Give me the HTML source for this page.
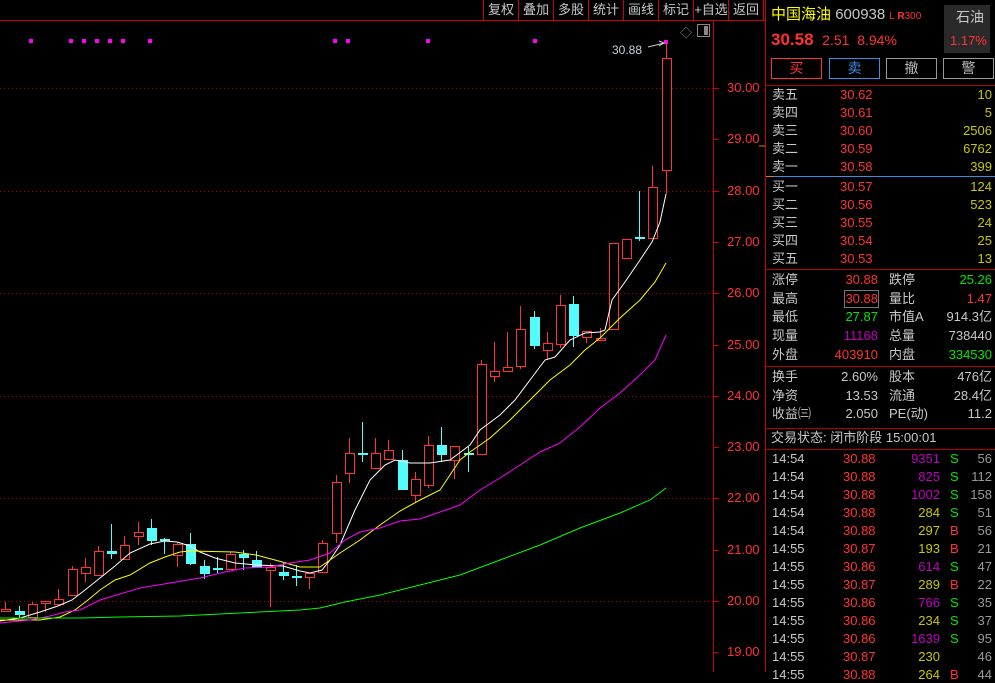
<!DOCTYPE html>
<html><head><meta charset="utf-8"><style>
*{margin:0;padding:0;box-sizing:border-box}
body{width:995px;height:672px;background:#000;overflow:hidden;position:relative;font-family:"Liberation Sans","Noto Sans CJK SC",sans-serif;font-size:13px;color:#c8c8c8}
.a{position:absolute;white-space:nowrap;line-height:16px}
.r{color:#ff3333}.g{color:#00e600}.y{color:#c8c800}.p{color:#c000c0}.w{color:#c8c8c8}
.tb{position:absolute;top:0;height:20px;border-right:1px solid #c00;line-height:19px;text-align:center;color:#c8c8c8;font-size:13px}
.hl{position:absolute;height:1px;background:#b00000}
.btn{position:absolute;top:58px;height:21px;width:51px;border:1px solid;text-align:center;line-height:19px;font-size:14px}
.rt{text-align:right}
</style></head><body>
<svg width="995" height="672" style="position:absolute;left:0;top:0" id="s"></svg>
<div class="hl" style="left:0;top:20px;width:765px;background:#d00000"></div>
<div style="position:absolute;left:483px;top:0;width:1px;height:20px;background:#c00"></div>
<div class="tb" style="left:484px;width:35px">复权</div>
<div class="tb" style="left:519px;width:35px">叠加</div>
<div class="tb" style="left:554px;width:35px">多股</div>
<div class="tb" style="left:589px;width:35px">统计</div>
<div class="tb" style="left:624px;width:35px">画线</div>
<div class="tb" style="left:659px;width:35px">标记</div>
<div class="tb" style="left:694px;width:35px">+自选</div>
<div class="tb" style="left:729px;width:35px">返回</div>
<div style="position:absolute;left:713px;top:20px;width:1px;height:652px;background:#c00"></div>
<div style="position:absolute;left:765px;top:0;width:1px;height:672px;background:#c00"></div>
<div class="a" style="left:612px;top:42px;color:#c8d0e0;font-size:12px">30.88</div>
<div class="a" style="left:680px;top:25px;color:#888;font-size:12px">◇</div>
<div style="position:absolute;left:697px;top:24px;width:13px;height:13px;border:1px solid #888"><div style="position:absolute;right:1px;top:1px;width:4px;height:9px;background:#888"></div></div>
<div id="ax"></div>
<!-- right panel -->
<div class="a" style="left:771px;top:6px;font-size:15px;line-height:18px"><span style="color:#ffff00">中国海油</span> <span style="color:#c8c8c8">600938</span> <span class="r" style="font-size:10px">L <b>R</b>300</span></div>
<div style="position:absolute;left:944px;top:5px;width:46px;height:48px;background:#2a2a2a"></div>
<div class="a" style="left:956px;top:9px;font-size:14px">石油</div>
<div class="a r" style="left:950px;top:33px;font-size:13px">1.17%</div>
<div class="a r" style="left:771px;top:30px;font-size:17px;line-height:20px"><b>30.58</b> <span style="font-size:14px">&nbsp;2.51&nbsp; 8.94%</span></div>
<div class="btn" style="left:771px;border-color:#ff3333;color:#ff3333">买</div>
<div class="btn" style="left:829px;border-color:#3a8ee6;color:#3a8ee6">卖</div>
<div class="btn" style="left:886px;border-color:#999;color:#bbb">撤</div>
<div class="btn" style="left:943px;border-color:#999;color:#bbb">警</div>
<div class="hl" style="left:766px;top:85px;width:229px"></div>
<div class="hl" style="left:766px;top:176px;width:229px;background:#3a8ee6"></div>
<div class="hl" style="left:766px;top:176px;width:8px;background:#e08000"></div>
<div class="hl" style="left:766px;top:269px;width:229px"></div>
<div class="hl" style="left:766px;top:366px;width:229px"></div>
<div class="hl" style="left:766px;top:428px;width:229px"></div>
<div class="hl" style="left:766px;top:449px;width:229px"></div>
<div id="rp"></div>
<script>
const S=document.getElementById('s');let h='';
const Y=p=>88+(30-p)*51.3;
for(const v of[30,28,26,24,22,20]){const y=Math.round(Y(v))+.5;h+=`<line x1="0" x2="713" y1="${y}" y2="${y}" stroke="#b00000" stroke-dasharray="1,3"/>`;}
for(let v=19;v<=30;v++){const y=Math.round(Y(v))+.5;h+=`<line x1="713" x2="719" y1="${y}" y2="${y}" stroke="#c00"/>`;}
for(const x of[31,71,84,97,110,123,150,335,348,428,535,666])h+=`<rect x="${x-2}" y="${x==666?40:39}" width="4" height="4" fill="#ff00ff"/>`;
h+=`<line x1="648" y1="47" x2="664" y2="43" stroke="#ccc"/><polyline points="659,41 664,43 659,46" fill="none" stroke="#ccc"/>`;
const C=[[5,1,609,611,602,611],[19,0,611,614,606,618],[32,1,604,617,602,617],[45,1,601,603,601,612],[58,1,599,604,589,604],[72,1,569,595,566,595],[85,1,567,573,558,582],[98,1,551,575,546,575],[111,0,551,553,524,559],[124,1,545,559,536,559],[138,1,532,536,522,545],[151,0,528,540,519,545],[164,0,539,540,538,554],[177,1,544,555,543,567],[190,0,544,563,533,565],[204,0,566,573,560,579],[217,0,568,569,557,573],[230,1,554,569,552,569],[243,0,554,557,550,570],[256,0,560,567,551,567],[270,1,567,570,563,607],[283,0,572,575,563,580],[296,0,576,577,565,586],[309,1,573,577,573,589],[322,1,543,572,540,573],[336,1,482,533,475,543],[349,1,453,473,438,483],[362,0,453,454,422,462],[375,1,453,468,438,468],[388,1,450,459,440,459],[402,0,460,489,450,490],[415,1,479,495,472,502],[428,1,445,485,436,488],[441,0,445,454,427,462],[454,1,446,460,446,479],[468,0,453,454,447,472],[481,1,364,454,360,454],[494,1,371,376,342,382],[507,1,367,371,332,371],[520,1,329,366,306,369],[534,0,317,345,311,349],[547,1,343,350,332,360],[560,1,305,344,295,348],[573,0,304,335,296,347],[586,1,331,337,331,343],[600,1,338,340,328,340],[613,1,243,329,243,329],[626,1,239,258,239,259],[639,0,237,238,191,241],[652,1,187,238,166,238],[666,1,58,170,42,194]];
for(const[x,u,t,b,wt,wb]of C){const c=u?'#ff3333':'#54fcfc';h+=`<line x1="${x+.5}" x2="${x+.5}" y1="${wt}" y2="${wb}" stroke="${c}"/>`;const bh=Math.max(b-t,1);if(u)h+=`<rect x="${x-4+.5}" y="${t+.5}" width="9" height="${bh}" fill="#000" stroke="${c}"/>`;else h+=`<rect x="${x-4}" y="${t}" width="10" height="${bh+1}" fill="${c}"/>`;}
const L=(pts,c)=>h+=`<polyline points="${pts}" fill="none" stroke="${c}" stroke-width="1"/>`;
L("0,621 20,618 40,612 58,606 72,600 85,590 100,578 115,566 130,553 150,544 165,541 177,542 190,546 200,552 215,558 235,563 256,565 283,566 300,571 310,573 322,570 330,560 340,545 355,510 370,480 385,465 395,460 410,463 430,463 450,460 470,445 480,430 500,415 515,400 530,380 545,360 555,357 570,340 585,333 600,332 605,330 612,300 625,282 640,260 652,242 660,222 666,194","#ffffff");
L("0,620 40,620 60,617 75,610 88,600 100,590 115,580 130,575 150,563 165,557 180,552 190,551 235,552 256,555 275,560 300,567 320,567 330,560 340,553 360,540 380,525 400,511 420,500 440,490 460,460 470,452 490,438 510,420 530,400 550,380 570,365 585,350 600,338 620,318 640,300 655,282 666,263","#ffff00");
L("0,623 30,620 50,616 65,612 80,610 100,600 120,594 140,588 170,583 200,578 225,572 245,568 270,567 290,563 310,560 330,553 345,540 360,532 380,528 400,521 420,519 440,512 460,505 480,490 500,478 520,465 540,452 560,443 580,427 600,408 620,393 640,375 655,360 666,335","#ff00ff");
L("0,618 80,618 120,617 180,616 240,613 300,610 320,608 345,602 380,595 420,585 460,575 500,560 540,545 580,528 620,513 650,500 666,488","#00ff00");
h+=`<line x1="759" x2="765" y1="146" y2="146" stroke="#e08000"/>`;
S.innerHTML=h;
let a='';for(let v=19;v<=30;v++){a+=`<div class="a r" style="left:727px;top:${Math.round(Y(v))-8}px;font-size:13px">${v}.00</div>`;}
document.getElementById('ax').innerHTML=a;
</script>
<div class="a w" style="left:772px;top:87px">卖五</div><div class="a r" style="left:840px;top:87px">30.62</div><div class="a y rt" style="right:3px;top:87px">10</div>
<div class="a w" style="left:772px;top:105px">卖四</div><div class="a r" style="left:840px;top:105px">30.61</div><div class="a y rt" style="right:3px;top:105px">5</div>
<div class="a w" style="left:772px;top:123px">卖三</div><div class="a r" style="left:840px;top:123px">30.60</div><div class="a y rt" style="right:3px;top:123px">2506</div>
<div class="a w" style="left:772px;top:141px">卖二</div><div class="a r" style="left:840px;top:141px">30.59</div><div class="a y rt" style="right:3px;top:141px">6762</div>
<div class="a w" style="left:772px;top:159px">卖一</div><div class="a r" style="left:840px;top:159px">30.58</div><div class="a y rt" style="right:3px;top:159px">399</div>
<div class="a w" style="left:772px;top:179px">买一</div><div class="a r" style="left:840px;top:179px">30.57</div><div class="a y rt" style="right:3px;top:179px">124</div>
<div class="a w" style="left:772px;top:197px">买二</div><div class="a r" style="left:840px;top:197px">30.56</div><div class="a y rt" style="right:3px;top:197px">523</div>
<div class="a w" style="left:772px;top:215px">买三</div><div class="a r" style="left:840px;top:215px">30.55</div><div class="a y rt" style="right:3px;top:215px">24</div>
<div class="a w" style="left:772px;top:233px">买四</div><div class="a r" style="left:840px;top:233px">30.54</div><div class="a y rt" style="right:3px;top:233px">25</div>
<div class="a w" style="left:772px;top:251px">买五</div><div class="a r" style="left:840px;top:251px">30.53</div><div class="a y rt" style="right:3px;top:251px">13</div>

<div class="a w" style="left:772px;top:272px">涨停</div><div class="a r rt" style="right:117px;top:272px">30.88</div><div class="a w" style="left:889px;top:272px">跌停</div><div class="a g rt" style="right:3px;top:272px">25.26</div>
<div class="a w" style="left:772px;top:291px">最高</div><div class="a r rt" style="right:117px;top:291px;outline:1px solid #777">30.88</div><div class="a w" style="left:889px;top:291px">量比</div><div class="a r rt" style="right:3px;top:291px">1.47</div>
<div class="a w" style="left:772px;top:309px">最低</div><div class="a g rt" style="right:117px;top:309px">27.87</div><div class="a w" style="left:889px;top:309px">市值A</div><div class="a w rt" style="right:3px;top:309px">914.3亿</div>
<div class="a w" style="left:772px;top:328px">现量</div><div class="a p rt" style="right:117px;top:328px">11168</div><div class="a w" style="left:889px;top:328px">总量</div><div class="a w rt" style="right:3px;top:328px">738440</div>
<div class="a w" style="left:772px;top:347px">外盘</div><div class="a r rt" style="right:117px;top:347px">403910</div><div class="a w" style="left:889px;top:347px">内盘</div><div class="a g rt" style="right:3px;top:347px">334530</div>

<div class="a w" style="left:772px;top:369px">换手</div><div class="a w rt" style="right:117px;top:369px">2.60%</div><div class="a w" style="left:889px;top:369px">股本</div><div class="a w rt" style="right:3px;top:369px">476亿</div>
<div class="a w" style="left:772px;top:388px">净资</div><div class="a w rt" style="right:117px;top:388px">13.53</div><div class="a w" style="left:889px;top:388px">流通</div><div class="a w rt" style="right:3px;top:388px">28.4亿</div>
<div class="a w" style="left:772px;top:406px">收益㈢</div><div class="a w rt" style="right:117px;top:406px">2.050</div><div class="a w" style="left:889px;top:406px">PE(动)</div><div class="a w rt" style="right:3px;top:406px">11.2</div>
<div class="a w" style="left:771px;top:430px">交易状态: 闭市阶段 15:00:01</div>
<div id="tk"></div>
<script>
const T=[["14:54","30.88","9351","p","S","56"],["14:54","30.88","825","p","S","112"],["14:54","30.88","1002","p","S","158"],["14:54","30.88","284","y","S","51"],["14:54","30.88","297","y","B","56"],["14:55","30.87","193","y","B","21"],["14:55","30.86","614","p","S","47"],["14:55","30.87","289","y","B","22"],["14:55","30.86","766","p","S","35"],["14:55","30.86","234","y","S","37"],["14:55","30.86","1639","p","S","95"],["14:55","30.87","230","y","","46"],["14:55","30.88","264","y","B","44"]];
let t='';T.forEach((r,i)=>{const y=451+i*18;t+=`<div class="a w" style="left:772px;top:${y}px">${r[0]}</div><div class="a r" style="left:843px;top:${y}px">${r[1]}</div><div class="a ${r[3]} rt" style="right:55px;top:${y}px">${r[2]}</div><div class="a ${r[4]=='S'?'g':'r'}" style="left:950px;top:${y}px">${r[4]}</div><div class="a rt" style="right:3px;top:${y}px;color:#999">${r[5]}</div>`;});
document.getElementById('tk').innerHTML=t;
</script>
</body></html>
